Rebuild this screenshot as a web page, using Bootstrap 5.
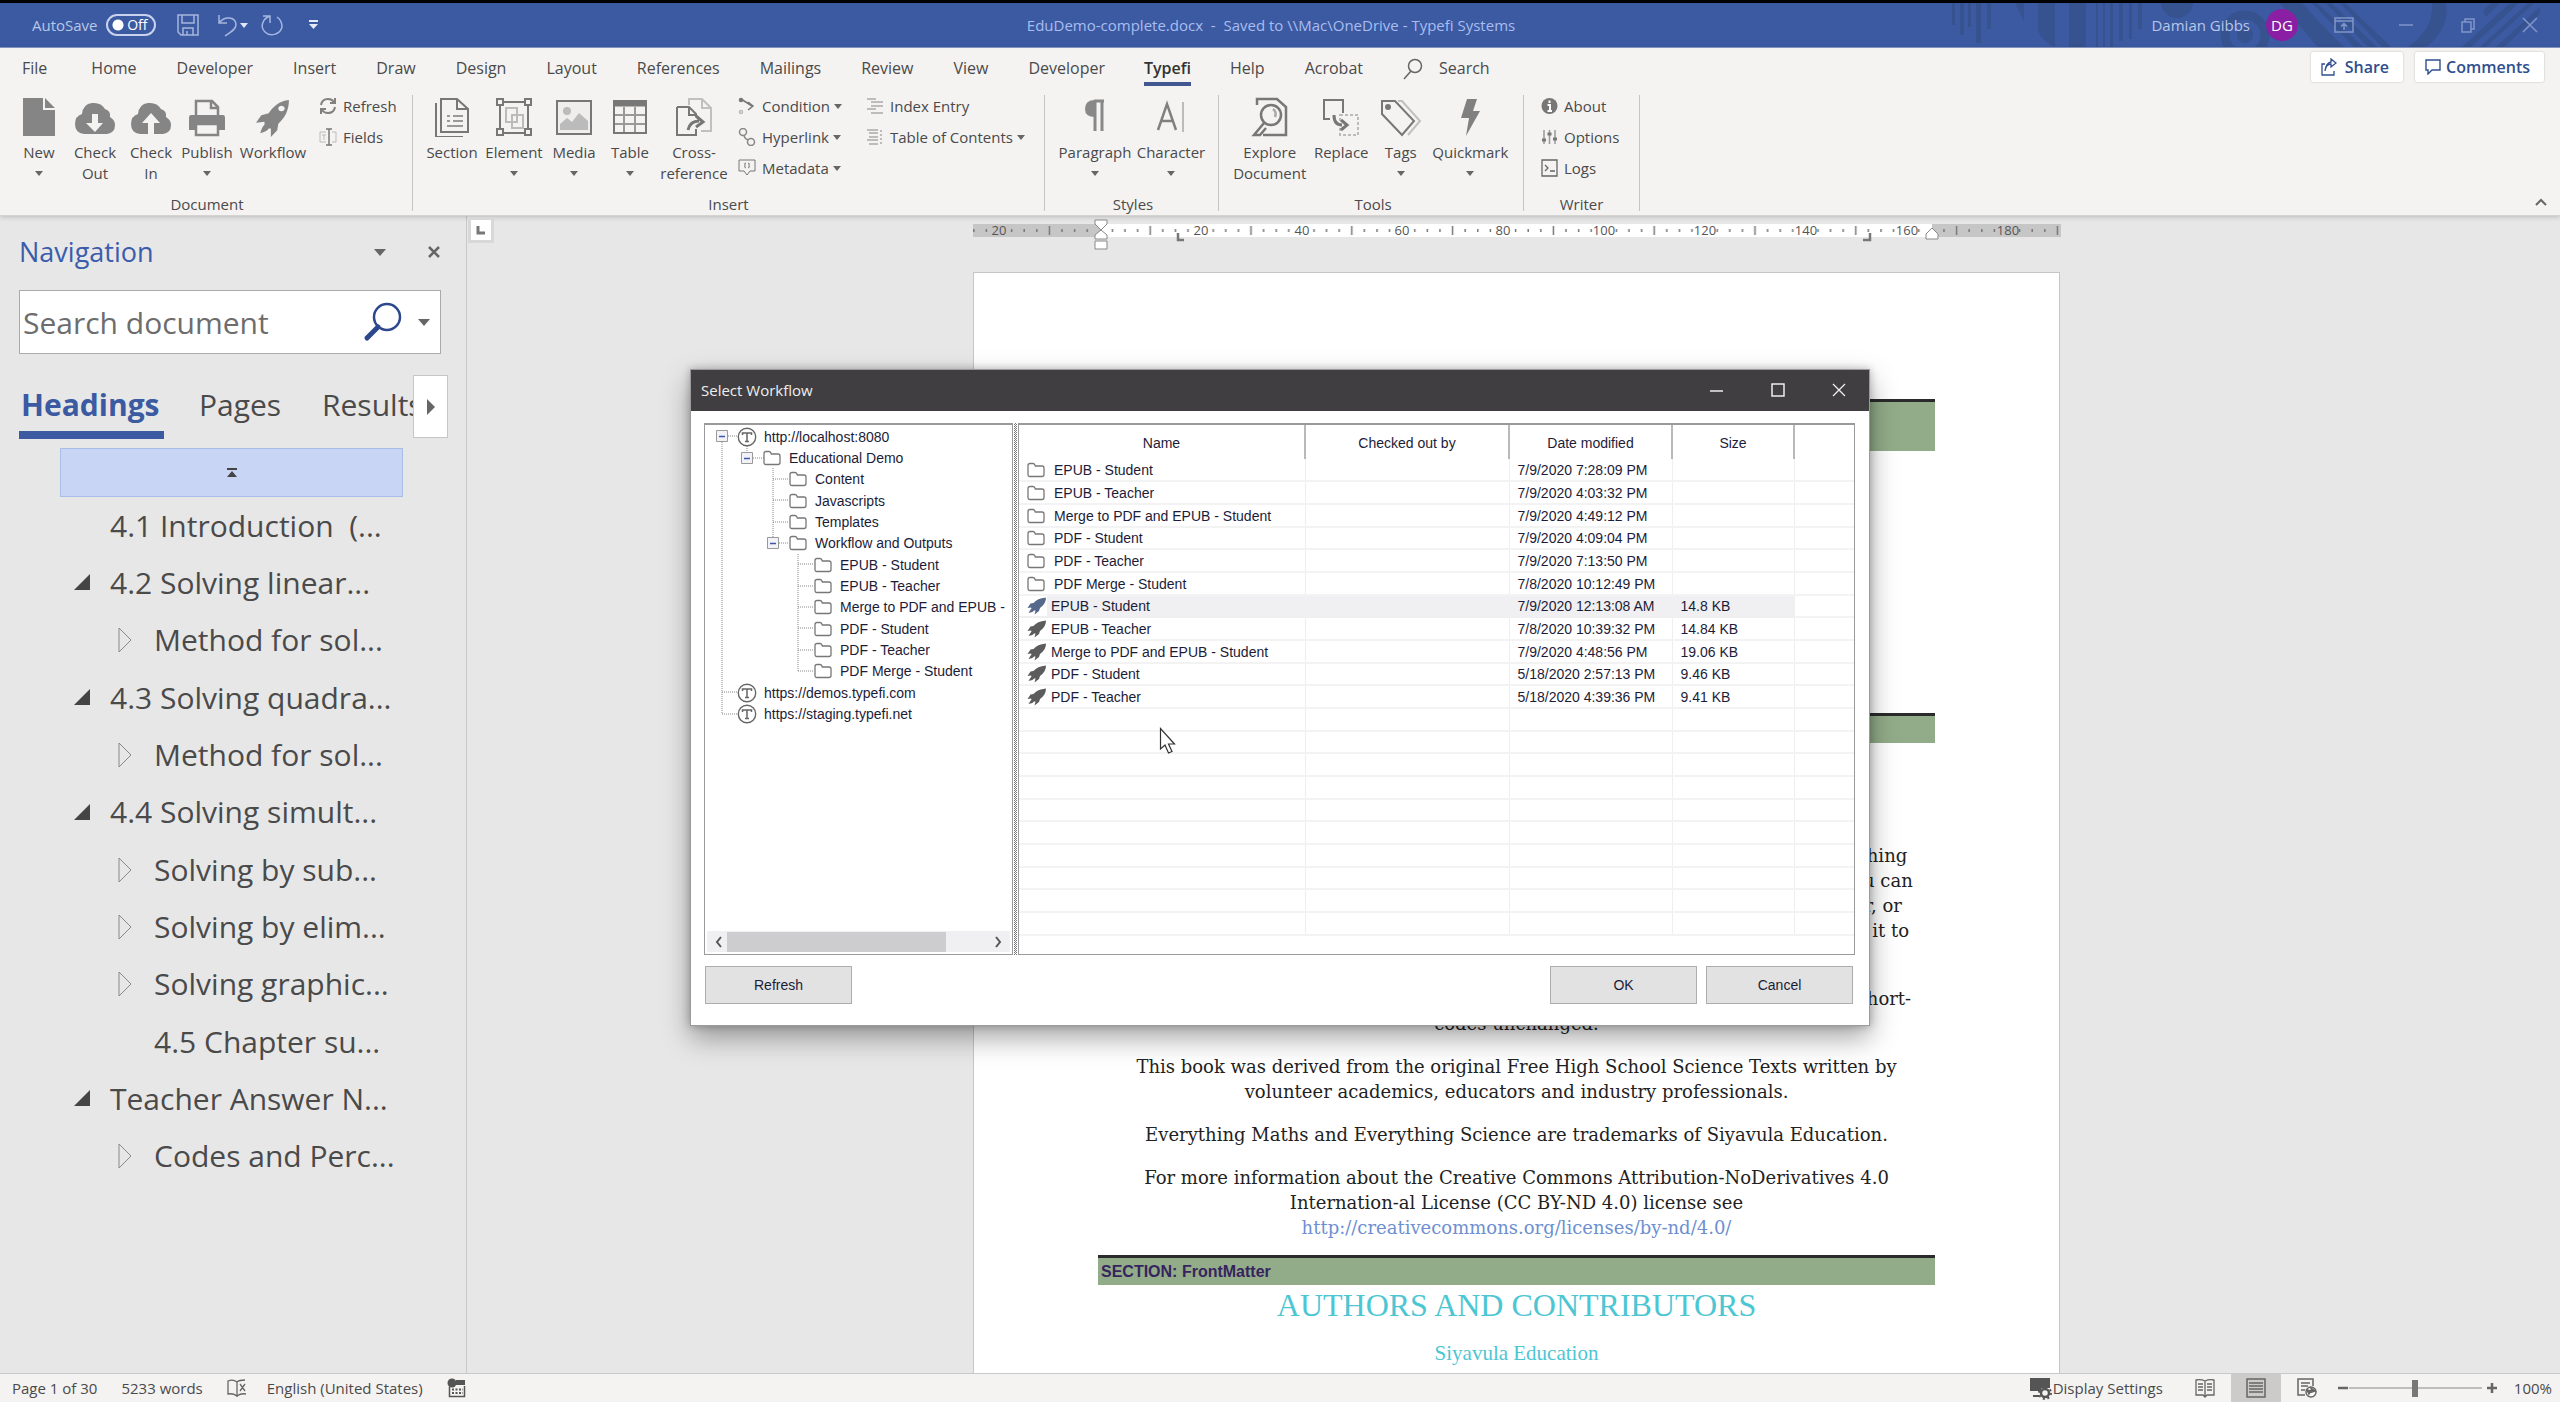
<!DOCTYPE html>
<html lang="en">
<head>
<meta charset="utf-8">
<meta name="viewport" content="width=device-width, initial-scale=1">
<title>EduDemo-complete.docx</title>
<link href="https://cdn.jsdelivr.net/npm/bootstrap@5.3.0/dist/css/bootstrap.min.css" rel="stylesheet">
<style>
:root{--word:#3b5aa2;--ink:#4a4a4a;--chrome:#f4f3f2;--desk:#e7e7e7}
body{font-family:"Open Sans","Noto Sans",sans-serif;font-size:15px;line-height:20px;color:var(--ink);background:var(--desk)}
svg{display:block;flex:none}
button{background:none;border:0;padding:0;color:inherit}
.titlebar{height:48px;background:var(--word);border-top:3px solid #000;border-bottom:1px solid #8c9cc6;color:#b9c6e8}
.titlebar .deco{top:0;right:0}
.title-side{flex:1 1 0}
.doc-name{color:#a9bdf0;margin-right:18px;white-space:pre}
.save-switch{appearance:none;width:50px;height:22px;border:2px solid #c8d2ec;border-radius:11px;margin:0;background:radial-gradient(circle at 10px 9px,#fff 5px,transparent 6px)}
.save-off{right:8px;top:1px;color:#fff;font-size:14px;line-height:20px}
.avatar{width:32px;height:32px;background:#8a1fa3;color:#fff;font-size:15px;margin:0 36px 0 16px}
.win-btns{gap:42px}
.ribbon{background:var(--chrome);border-bottom:1px solid #d5d3d0;box-shadow:0 1px 5px rgba(0,0,0,.2)}
.tabs{height:43px;font-size:16px}
.tabs a{color:var(--ink);text-decoration:none;padding:10px 20px 0;height:38px}
.tabs .tab-file{padding-right:24px;padding-left:22px}
.tabs .tab-on{font-weight:600;color:#333;padding:0}
.tabs .tab-on span{display:block;margin:0 19px;padding-top:10px;height:38px;border-bottom:4px solid #40578f}
.pill{background:#fff;color:#2f4f8f;font-size:16px;font-weight:600;height:30px;border-radius:2px;box-shadow:0 0 2px rgba(0,0,0,.25);padding:0 14px 0 10px}
.group{height:116px;border-right:1px solid #c4c4c4;padding:0 9px}
.g-doc{width:413px;padding-left:11px}.g-ins{width:632px}.g-sty{width:174px;padding-left:12px}.g-tool{width:305px;padding-left:13px}.g-wri{width:116px}
.group-body{height:99px}
.group-name{line-height:20px;height:17px}
.big{display:flex;flex-direction:column;align-items:center;padding-top:2px;line-height:21px}
.big svg{margin-bottom:5px;height:40px}
.w52{width:52px}.w56{width:56px}.w60{width:60px}.w64{width:64px}.w68{width:68px}.w72{width:72px}.w76{width:76px}.w88{width:88px}
.stack{padding-top:1px;gap:11px}
.stack button{display:flex;align-items:center;gap:6px;height:20px;white-space:nowrap}
.stack .caret{margin-left:-2px}
.caret{width:0;height:0;border:4px solid transparent;border-top:5px solid #666;border-bottom:0;display:inline-block}
.caret.lg{border-width:6px;border-top-width:7px;border-bottom:0}
.big .caret{margin-top:8px}
.navpane{width:467px;border-right:1px solid #c8c8c8;padding:18px 18px 0 19px}
.pane-title{font-size:27px;line-height:36px;color:#3a5cab}
.pane-ctl{gap:42px}
.findbox{height:64px;background:#fff;border:1px solid #ababab;margin:20px 7px 0 0;padding:0 10px 0 3px}
.findbox input{border:0;outline:0;padding:0;height:48px;font-size:30px;color:#666;min-width:0;background:none}
.findbox input::placeholder{color:#6d6d6d;opacity:1}
.pane-tabs{margin-top:21px;height:64px;font-size:30px;line-height:40px}
.pane-tabs button{padding:0 0 4px;height:64px;text-align:left}
.pane-tabs .on{font-weight:700;color:var(--word);border-bottom:8px solid var(--word);padding:4px 0 0 2px;width:145px;margin-right:35px}
.pane-tabs .pg{width:123px}
.pane-tabs .res{width:91px;overflow:hidden}
.pane-tabs .more{width:35px;height:63px;background:#fff;border:1px solid #c6c6c6;padding:0;display:flex;align-items:center;justify-content:center}
.jump{height:49px;margin:9px 45px 0 41px;background:#c9d5f5;border:1px solid #a9bde8}
.headings{font-size:30px;padding-left:55px}
.headings li{height:57px;display:flex;align-items:center;white-space:pre}
.headings li:nth-child(3n){height:58px}
.headings .twist{width:36px}
.headings .sub{padding-left:44px}
.desk{padding-left:6px}
.corner{width:26px;height:26px;background:#fff;border:3px solid #d8d8d8;left:1px;top:1px}
.ruler{margin-top:3px;width:1088px}
.ruler text{font:13px "Open Sans",sans-serif;fill:#555;text-anchor:middle}
.paper{width:1087px;margin-top:21px;background:#fff;border:1px solid #c6c6c6;border-bottom:0;padding:126px 124px 0;font:18px/25px "DejaVu Serif",serif;color:#222;text-align:center;white-space:nowrap}
.paper p{margin-bottom:18px}
.band{background:#92ac89;border-top:3px solid #2b2b2b;height:30px;text-align:left;padding-left:3px;font:bold 16px/27px "Liberation Sans",Arial,sans-serif;color:#37245f}
.band.tall{height:52px;margin-bottom:262px}
.band.mid{margin-bottom:100px}
.paper a{color:#6e8fd0;text-decoration:none}
.paper .last{margin-bottom:15px}
.paper h1{font:32px/40px "Liberation Serif",serif;color:#4cc6d3;margin:0 0 16px}
.paper h2{font:21px/24px "Liberation Serif",serif;color:#4cc6d3}
.statusbar{height:29px;background:var(--chrome);border-top:1px solid #c9c9c9;white-space:nowrap}
.statusbar .view-on{width:50px;height:28px;background:#cdcbca}
.zoomer{appearance:none;width:133px;height:18px;margin:0;background:linear-gradient(#c0bebd,#c0bebd) center/100% 2px no-repeat}
.zoomer::-webkit-slider-thumb{appearance:none;width:6px;height:17px;background:#777}
.dlg{left:50%;top:369px;width:1180px;margin-left:-590px;background:#fff;border:1px solid #9b9b9b;box-shadow:0 12px 26px rgba(0,0,0,.35),0 0 8px rgba(0,0,0,.25);font:14px/20px "Liberation Sans",Arial,sans-serif;color:#1c1c38}
.dlg-head{height:41px;background:#403e41;color:#eee;font:15px/20px "Open Sans",sans-serif;padding:0 23px 2px 10px}
.dlg-head .ctl{gap:47px}
.dlg-body{padding:12px 14px 0 13px;height:544px}
.panel{border:1px solid #9a9a9c;border-top-width:2px}
.treebox{width:309px;padding:1px 2px 2px}
.gutter{width:3px;margin:0 1px;background:repeating-conic-gradient(#777 0 25%,#fff 0 50%) 0 0/2px 2px}
.listbox{min-width:0}
.tree li{height:21px;display:flex;align-items:center;white-space:nowrap;overflow:hidden;padding-left:30px}
.tree li:nth-child(3n){height:22px}
.tree li svg{margin-right:7px}
.tree .l1{padding-left:56px}.tree .l2{padding-left:82px}.tree .l3{padding-left:107px}
.tree .l1 svg,.tree .l2 svg,.tree .l3 svg{margin-right:8px}
.guides{left:0;top:0}
.hbar{height:21px;background:#f0f0f2}
.hbar .thumb{width:219px;height:20px;background:#cdcdcf}
.files{table-layout:fixed;width:100%;border-collapse:collapse}
.files th{height:34px;font-weight:400;text-align:center;padding:2px 0 0;border-right:2px solid #b9b9bb}
.files th:last-child{border-right:0}
.files td{height:23px;padding:0 0 0 8px;border-right:1px solid #efefef;border-bottom:2px solid #f3f3f3;line-height:20px;white-space:nowrap}
.files td:last-child{border-right:0}
.files tr:nth-child(3n+1) td{height:22px}
.files .sel td:not(:last-child){background:#f0eff2;border-color:#f0eff2}
.files .sel td:first-child{background:linear-gradient(90deg,#fff 28px,#f0eff2 28px)}
.fi{gap:9px}.ro{gap:4px}
.dbtn{width:147px;height:38px;background:#e2e2e2;border:1px solid #adadad;color:#1c1c38}
.dlg-foot{padding:11px 16px 21px 14px;gap:9px}
.pointer{left:1159px;top:727px}
</style>
<script src="https://cdn.jsdelivr.net/npm/bootstrap@5.3.0/dist/js/bootstrap.bundle.min.js"></script>
</head>
<body class="vh-100 d-flex flex-column overflow-hidden">
<svg width="0" height="0" class="position-absolute" aria-hidden="true">
<symbol id="folder" viewBox="0 0 18 16"><path d="M1 3.5Q1 1.5 3 1.5H6Q7.3 1.5 7.8 2.7L8.3 4H15Q17 4 17 6V12.5Q17 14.5 15 14.5H3Q1 14.5 1 12.5Z" fill="none" stroke="#777" stroke-width="1.3"/></symbol>
<symbol id="rocket" viewBox="0 0 32 40" preserveAspectRatio="none"><path d="M31 1C22 2 16 8 12 15L5 17 0 25 8 24 8 27C6 29 5 32 4 36 8 35 11 33 12 31L14 31 14 40 20 33 21 26C27 20 31 12 31 1ZM24 7A3 3 0 1 1 23.900 7Z" fill="currentColor" fill-rule="evenodd"/></symbol>
<symbol id="rocket-sm" viewBox="0 0 20 18"><path d="M19 0.500C13 1 9 3 6.500 6L3.500 6.500 0.500 11 4 10.500 4.500 11.500C3.500 12.500 2.500 14 1.500 16 4 15.500 6 15 7 13.500L8.500 13.500 7.500 17.500 12 14 13 11C17 8 19 4.500 19 0.500Z" fill="currentColor"/></symbol>
<symbol id="tmark" viewBox="0 0 20 20"><circle cx="10" cy="10" r="8.700" fill="#fff" stroke="#666" stroke-width="1.400"/><path d="M5.500 8V6H14.500V8M10 6V14.500M8 14.500H12" fill="none" stroke="#666" stroke-width="1.500"/></symbol>
</svg>

<header class="titlebar position-relative d-flex align-items-center px-3">
  <svg class="deco position-absolute" width="620" height="44" aria-hidden="true" fill="#36528f">
    <path d="M12 0h3v22h-3zM20 0h4v32h-4zM28 0h3v24h-3zM36 0h5v40h-5zM47 0h4v26h-4zM75 0h9v18zM98 0h17v44q-17-8-17-20zM129 0h17v44h-17zM156 0h2v44h-2zM163 0h2v44h-2zM170 0h3v44h-3zM179 0h4v38h-4zM189 0h3v36h-3zM198 0h4v26h-4z"/>
    <circle cx="237" cy="-1" r="16"/>
    <circle cx="305" cy="32" r="20" fill="none" stroke="#36528f" stroke-width="9"/><circle cx="305" cy="32" r="8"/>
    <path d="M340 0h22l40 44h-24zM364 10h6l34 34h-8zM372 0h5l46 44h-9zM386 0h5l46 44h-9zM400 0h5l46 44h-9zM492 0h14q4 26-20 44h-18q26-18 24-44zM543 8l8-8h9l-14 14zM522 44l48-44h9l-48 44zM540 44l48-44h6l-48 44zM556 44l44-40v6l-36 34z"/>
  </svg>
  <div class="title-side d-flex align-items-center position-relative">
    <label for="autosave" class="ms-3 me-2">AutoSave</label>
    <div class="position-relative d-flex"><input id="autosave" class="save-switch" type="checkbox" role="switch"><span class="save-off position-absolute">Off</span></div>
    <button class="ms-3" aria-label="Save"><svg class="ms-1" width="24" height="24" fill="none" stroke="#a7b6de" stroke-width="1.500"><path d="M2 2H22V22H5L2 19ZM6 2V10H18V2M7 22V15H17V22M11 18V22"/></svg></button>
    <button class="ms-3 d-flex align-items-center" aria-label="Undo"><svg width="24" height="24" fill="none" stroke="#a7b6de" stroke-width="1.500"><path d="M3 2V10H11M3 10C9 2 20 4 20 12 20 16 15 19 9 23"/></svg><i class="caret" style="border-top-color:#dfe6f7"></i></button>
    <button class="ms-2" aria-label="Redo"><svg class="ms-1" width="24" height="24" fill="none" stroke="#a7b6de" stroke-width="1.500"><path d="M3 3H10V10M10 3C2 6 0 14 5 19 10 24 20 22 22 14 22 10 20 6 17 4"/></svg></button>
    <button class="ms-4" aria-label="Customize toolbar"><svg width="10" height="12" fill="#e6ebf8"><path d="M1 1H10V3H1ZM1 5H10L5.500 10Z"/></svg></button>
  </div>
  <div class="doc-name position-relative">EduDemo-complete.docx  -  Saved to \\Mac\OneDrive - Typefi Systems</div>
  <div class="title-side d-flex align-items-center justify-content-end position-relative">
    <span>Damian Gibbs</span>
    <span class="avatar rounded-circle d-flex align-items-center justify-content-center">DG</span>
    <div class="win-btns d-flex align-items-center me-1">
      <button aria-label="Ribbon display"><svg width="20" height="16" fill="none" stroke="#8195c8" stroke-width="1.500"><path d="M1 1H19V15H1ZM1 4H19M10 13V7M7 9.500L10 6.500 13 9.500"/></svg></button>
      <button aria-label="Minimize"><svg width="20" height="16" stroke="#8195c8" stroke-width="1.500"><path d="M3 8H17"/></svg></button>
      <button aria-label="Restore"><svg width="20" height="16" fill="none" stroke="#8195c8" stroke-width="1.500"><path d="M4 5H13V15H4ZM7 5V2H16V12H13"/></svg></button>
      <button aria-label="Close"><svg width="20" height="16" stroke="#8195c8" stroke-width="1.500"><path d="M3 1L17 15M17 1L3 15"/></svg></button>
    </div>
  </div>
</header>

<div class="ribbon position-relative">
  <nav class="tabs d-flex">
    <a class="tab-file" href="#">File</a><a href="#">Home</a><a href="#">Developer</a><a href="#">Insert</a><a href="#">Draw</a><a href="#">Design</a><a href="#">Layout</a><a href="#">References</a><a href="#">Mailings</a><a href="#">Review</a><a href="#">View</a><a href="#">Developer</a><a class="tab-on" href="#"><span>Typefi</span></a><a href="#">Help</a><a href="#">Acrobat</a>
    <a href="#" class="d-flex align-items-start gap-3"><svg width="20" height="22" fill="none" stroke="#666" stroke-width="1.500"><circle cx="12" cy="8" r="6.500"/><path d="M8 13L1 21"/></svg>Search</a>
    <div class="ms-auto d-flex gap-2 pt-1 pe-3">
      <button class="pill d-flex align-items-center gap-2"><svg width="16" height="18" fill="none" stroke="#2f4f8f" stroke-width="1.300"><path d="M4 6H1V17H13V13M4 13Q5 6 10 6V9L15 5 10 1V4Q5 5 4 13"/></svg>Share</button>
      <button class="pill d-flex align-items-center gap-1 ms-1"><svg width="17" height="16" fill="none" stroke="#2f4f8f" stroke-width="1.400"><path d="M1 1H15V11H7L3 15V11H1Z"/></svg>Comments</button>
    </div>
  </nav>
  <div class="d-flex pt-1 pb-1">
    <section class="group g-doc"><div class="group-body d-flex">
      <button class="big w56"><svg width="34" height="40" fill="#858585"><path d="M1 1H21V13H33V39H1ZM23 1L33 11H23Z"/></svg>New<i class="caret"></i></button>
      <button class="big w56"><svg width="42" height="40" fill="#858585"><path fill-rule="evenodd" d="M10 37Q1 36 1 27 1 19 8 17 9 7 18 6 27 5 31 12 37 14 36 20 41 23 41 28 41 36 33 37ZM18 17V26H12L21 35 29 26H24V17Z"/></svg>Check<br>Out</button>
      <button class="big w56"><svg width="42" height="40" fill="#858585"><path fill-rule="evenodd" d="M10 37Q1 36 1 27 1 19 8 17 9 7 18 6 27 5 31 12 37 14 36 20 41 23 41 28 41 36 33 37ZM18 37V26H12L21 16 30 26H24V37Z"/></svg>Check<br>In</button>
      <button class="big w56"><svg width="38" height="40" fill="none" stroke="#858585" stroke-width="2.500"><path d="M8 18V4H24L30 10V18M23 4V11H30"/><path d="M3 18H35Q37 18 37 21V33H1V21Q1 18 3 18Z" fill="#858585" stroke="none"/><path d="M8 27H30V38H8Z" fill="#f4f3f2"/></svg>Publish<i class="caret"></i></button>
      <button class="big w76"><svg width="34" height="40" style="color:#858585"><use href="#rocket" width="34" height="38" y="2"/></svg>Workflow</button>
      <div class="stack d-flex flex-column ms-2">
        <button><svg width="18" height="18" fill="none" stroke="#808080" stroke-width="2"><path d="M2 8Q3 2 9 2 13 2 15 5M16 1V6H11M16 10Q15 16 9 16 5 16 3 13M2 17V12H7"/></svg>Refresh</button>
        <button><svg width="18" height="20" fill="none" stroke="#999"><path d="M7 5H1V15H7M13 5H17V15H13" stroke="#bbb"/><path d="M3 8H7M5 8V13" stroke="#bbb"/><path d="M7 2H13M10 2V18M7 18H13" stroke-width="1.500" stroke="#777"/></svg>Fields</button>
      </div>
    </div><div class="group-name text-center">Document</div></section>
    <section class="group g-ins"><div class="group-body d-flex">
      <button class="big w60"><svg width="36" height="42" fill="none" stroke="#777" stroke-width="2"><path d="M7 2H23L34 12V35H7ZM23 2V12H34M2 6V40H29"/><path d="M13 19H16M19 19H29M13 24H16M19 24H29M13 29H29" stroke="#999"/></svg>Section</button>
      <button class="big w64"><svg width="38" height="40" fill="none" stroke="#777" stroke-width="2"><path d="M5 7V33M33 7V33M7 5H31M7 36H31"/><path d="M2 2H8V8H2ZM30 2H36V8H30ZM2 32H8V38H2ZM30 32H36V38H30Z"/><path d="M11 11H22V25H11ZM17 18H28V31H17Z" stroke="#bbb"/></svg>Element<i class="caret"></i></button>
      <button class="big w56"><svg width="38" height="40"><rect x="2" y="4" width="34" height="33" fill="#efeeed" stroke="#777" stroke-width="2"/><circle cx="12" cy="14" r="4" fill="#bbb"/><path d="M5 33V27L12 21 17 25 24 16 33 24V33Z" fill="#bbb"/></svg>Media<i class="caret"></i></button>
      <button class="big w56"><svg width="36" height="40" fill="none" stroke="#777" stroke-width="2"><path d="M2 4H34V36H2Z"/><path d="M2 7H34" stroke-width="5"/><path d="M3 18H33M3 27H33M12 10V35M23 10V35" stroke="#999"/></svg>Table<i class="caret"></i></button>
      <button class="big w72"><svg width="38" height="42" fill="none" stroke="#777" stroke-width="2"><path d="M14 8V2H27L36 11V34H26M27 2V11H36" stroke="#c0c0c0"/><path d="M2 10H14L21 17V20M2 10V38H21V32M14 10V18H20"/><path d="M13 33Q15 24 24 24M21 19L28 25 21 30" stroke-width="3"/></svg>Cross-<br>reference</button>
      <div class="stack d-flex flex-column ms-2">
        <button><svg width="18" height="18" fill="none" stroke="#777" stroke-width="1.500"><path d="M3 2L14 9M10 5L15 9 10 13"/><circle cx="3" cy="3" r="1.500" fill="#777"/><circle cx="3" cy="15" r="1.500" stroke="#bbb"/></svg>Condition<i class="caret"></i></button>
        <button><svg width="18" height="18" fill="none" stroke="#888" stroke-width="1.500"><circle cx="5" cy="4" r="3.500"/><circle cx="13" cy="14" r="3.500"/><path d="M6 8Q7 11 10 12"/></svg>Hyperlink<i class="caret"></i></button>
        <button><svg width="18" height="18" fill="none" stroke="#777"><path d="M1 1H17V12H12L9 16 6 12H1Z"/><path d="M8 4Q6 4 7 6 6 9 8 9M10 4Q12 4 11 6 12 9 10 9"/></svg>Metadata<i class="caret"></i></button>
      </div>
      <div class="stack d-flex flex-column ms-4">
        <button><svg width="18" height="18" fill="none" stroke="#aaa" stroke-width="1.500"><path d="M1 2H10M5 5H17M5 9H17M1 12H10M5 16H17"/></svg>Index Entry</button>
        <button><svg width="18" height="18" fill="none" stroke="#aaa" stroke-width="1.500"><path d="M1 2H12M3 5H12M3 9H12M1 12H12M3 16H12"/><path d="M15 2V17" stroke-dasharray="2 2"/></svg>Table of Contents<i class="caret"></i></button>
      </div>
    </div><div class="group-name text-center">Insert</div></section>
    <section class="group g-sty"><div class="group-body d-flex">
      <button class="big w76"><svg width="24" height="40"><path d="M11 4H21M12 4V34M19 4V34" stroke="#888" stroke-width="3" fill="none"/><path d="M12 3Q2 3 2 12 2 20 12 20Z" fill="#888"/></svg>Paragraph<i class="caret"></i></button>
      <button class="big w76"><svg width="32" height="40" fill="none" stroke="#808080" stroke-width="2.500"><path d="M3 33L12 7 21 33M6 24H18"/><path d="M28 5V35" stroke="#bbb" stroke-width="2"/></svg>Character<i class="caret"></i></button>
    </div><div class="group-name text-center">Styles</div></section>
    <section class="group g-tool"><div class="group-body d-flex">
      <button class="big w76"><svg width="38" height="40" fill="none" stroke="#777" stroke-width="2.500"><path d="M6 8V2H26L35 10V38H12"/><circle cx="20" cy="18" r="10"/><path d="M13 26L3 38H9L15 31"/><path d="M22 12Q26 15 24 20" stroke="#aaa"/></svg>Explore<br>Document</button>
      <button class="big w68"><svg width="38" height="40" fill="none" stroke="#777" stroke-width="2"><path d="M8 22H2V3H21V16"/><path d="M18 18H36V38H18Z" stroke="#bbb" stroke-dasharray="3 2"/><path d="M12 18Q12 28 20 28M19 23L25 28 19 33" stroke-width="3"/></svg>Replace</button>
      <button class="big w52"><svg width="42" height="40" fill="none" stroke="#777" stroke-width="2"><path d="M18 4H22L40 24 28 38" stroke="#c0c0c0"/><path d="M2 4H15L34 24 22 38 2 17Z"/><circle cx="8" cy="10" r="2" fill="#777"/></svg>Tags<i class="caret"></i></button>
      <button class="big w88"><svg width="22" height="40" fill="#808080"><path d="M8 2H18L14 14H21L7 39 10 21H2Z"/></svg>Quickmark<i class="caret"></i></button>
    </div><div class="group-name text-center">Tools</div></section>
    <section class="group g-wri"><div class="group-body d-flex">
      <div class="stack d-flex flex-column ms-2">
        <button><svg width="17" height="18"><circle cx="8.500" cy="9" r="8" fill="#777"/><path d="M8.500 3.500V6M6.500 8H9V14M6.500 14H11" stroke="#fff" stroke-width="2" fill="none"/></svg>About</button>
        <button><svg width="17" height="18" stroke="#999" stroke-width="1.500"><path d="M3 2V16M8.500 2V16M14 2V16"/><path d="M1 12H5M6.500 6H10.500M12 11H16" stroke="#777" stroke-width="3"/></svg>Options</button>
        <button><svg width="17" height="18" fill="none" stroke="#666" stroke-width="1.300"><path d="M1 1H16V17H1ZM4 6L7 9 4 12M9 12H14"/></svg>Logs</button>
      </div>
    </div><div class="group-name text-center">Writer</div></section>
    <button class="ms-auto align-self-end me-2 pb-1" aria-label="Collapse ribbon"><svg class="me-1" width="14" height="10" fill="none" stroke="#666" stroke-width="2"><path d="M2 8L7 3 12 8"/></svg></button>
  </div>
</div>

<main class="flex-fill d-flex overflow-hidden">
  <aside class="navpane flex-shrink-0">
    <div class="d-flex align-items-center">
      <h2 class="pane-title fw-normal m-0 me-auto">Navigation</h2>
      <div class="pane-ctl d-flex align-items-center me-2">
        <button aria-label="Pane options" class="d-flex"><i class="caret lg"></i></button>
        <button aria-label="Close pane"><svg width="12" height="12" stroke="#666" stroke-width="2.500"><path d="M1 1L11 11M11 1L1 11"/></svg></button>
      </div>
    </div>
    <div class="findbox d-flex align-items-center">
      <input id="find" class="flex-fill" type="text" placeholder="Search document" aria-label="Search document">
      <svg width="40" height="40" fill="none" stroke="#2c478c"><circle cx="25" cy="15" r="13" stroke-width="2.500"/><path d="M16 25L5 36" stroke-width="5" stroke-linecap="round"/></svg>
      <button aria-label="Search options" class="ms-3 d-flex"><i class="caret lg"></i></button>
    </div>
    <div class="pane-tabs d-flex">
      <button class="on">Headings</button><button class="pg">Pages</button><button class="res">Results</button>
      <button class="more" aria-label="More"><svg width="8" height="16" fill="#666"><path d="M0 0L8 8 0 16Z"/></svg></button>
    </div>
    <div class="jump d-flex align-items-center justify-content-center"><svg width="10" height="10" fill="#444"><path d="M0 0H10V2H0ZM0 9L5 3 10 9Z"/></svg></div>
    <ul class="headings list-unstyled m-0">
      <li><span class="twist"></span>4.1 Introduction  (...</li>
      <li><span class="twist"><svg width="17" height="17" fill="#444"><path d="M0 16H16V0Z"/></svg></span>4.2 Solving linear...</li>
      <li class="sub"><span class="twist"><svg width="15" height="26" fill="none" stroke="#888"><path d="M1 1V25L13 13Z"/></svg></span>Method for sol...</li>
      <li><span class="twist"><svg width="17" height="17" fill="#444"><path d="M0 16H16V0Z"/></svg></span>4.3 Solving quadra...</li>
      <li class="sub"><span class="twist"><svg width="15" height="26" fill="none" stroke="#888"><path d="M1 1V25L13 13Z"/></svg></span>Method for sol...</li>
      <li><span class="twist"><svg width="17" height="17" fill="#444"><path d="M0 16H16V0Z"/></svg></span>4.4 Solving simult...</li>
      <li class="sub"><span class="twist"><svg width="15" height="26" fill="none" stroke="#888"><path d="M1 1V25L13 13Z"/></svg></span>Solving by sub...</li>
      <li class="sub"><span class="twist"><svg width="15" height="26" fill="none" stroke="#888"><path d="M1 1V25L13 13Z"/></svg></span>Solving by elim...</li>
      <li class="sub"><span class="twist"><svg width="15" height="26" fill="none" stroke="#888"><path d="M1 1V25L13 13Z"/></svg></span>Solving graphic...</li>
      <li class="sub"><span class="twist"></span>4.5 Chapter su...</li>
      <li><span class="twist"><svg width="17" height="17" fill="#444"><path d="M0 16H16V0Z"/></svg></span>Teacher Answer N...</li>
      <li class="sub"><span class="twist"><svg width="15" height="26" fill="none" stroke="#888"><path d="M1 1V25L13 13Z"/></svg></span>Codes and Perc...</li>
    </ul>
  </aside>
  <div class="desk flex-fill position-relative d-flex flex-column align-items-center">
    <div class="corner position-absolute"><svg width="20" height="20" fill="none" stroke="#777" stroke-width="3"><path d="M7 6V13H14"/></svg></div>
    <svg class="ruler" height="32" viewBox="0 0 1088 32">
      <defs><pattern id="ticks" x="26" y="0" width="100.800" height="32" patternUnits="userSpaceOnUse"><path d="M12.600 10v3M25.200 10v3M37.800 10v3M50.400 7v9M63 10v3M75.600 10v3M88.200 10v3" stroke="#777" stroke-width="1.500"/></pattern></defs>
      <rect y="5" width="1088" height="13" fill="#c6c6c6"/><rect x="128" y="5" width="831" height="13" fill="#fff"/>
      <rect y="5" width="1088" height="13" fill="url(#ticks)"/>
      <text x="26" y="16">20</text><text x="228" y="16">20</text><text x="329" y="16">40</text><text x="429" y="16">60</text><text x="530" y="16">80</text><text x="631" y="16">100</text><text x="732" y="16">120</text><text x="833" y="16">140</text><text x="934" y="16">160</text><text x="1035" y="16">180</text>
      <path d="M122 1H134V5L128 11 134 16V20H122V16L128 11 122 5ZM122 22H134V30H122ZM953 20V15L959 9 965 15V20Z" fill="#fff" stroke="#888"/>
      <path d="M205 14V21H211M897 14V21H890" fill="none" stroke="#777" stroke-width="2.500"/>
    </svg>
    <article class="paper flex-fill">
      <div class="band tall"></div>
      <div class="band mid"></div>
      <p>You are allowed and encouraged to copy any of the Everything Maths and Everything<br>Science textbooks. You can legally photocopy any page or even the books, and you can<br>download it from our web site, read it on your phone, a tablet, an iPad, computer, or<br>burn it to a CD, put it on your own flash drive, e-mail it all around or even upload it to<br>your website.</p>
      <p>The only restriction is that you have to keep this book, cover, title, contents and short-<br>codes unchanged.</p>
      <p>This book was derived from the original Free High School Science Texts written by<br>volunteer academics, educators and industry professionals.</p>
      <p>Everything Maths and Everything Science are trademarks of Siyavula Education.</p>
      <p class="last">For more information about the Creative Commons Attribution-NoDerivatives 4.0<br>Internation-al License (CC BY-ND 4.0) license see<br><a href="#">http://creativecommons.org/licenses/by-nd/4.0/</a></p>
      <div class="band">SECTION: FrontMatter</div>
      <h1>AUTHORS AND CONTRIBUTORS</h1>
      <h2>Siyavula Education</h2>
    </article>
  </div>
</main>

<footer class="statusbar d-flex align-items-center">
  <span class="ms-2 me-4 ps-1">Page 1 of 30</span><span class="me-4">5233 words</span>
  <svg width="20" height="20" fill="none" stroke="#666" stroke-width="1.300"><path d="M10 4Q6 1 1 3V16Q6 15 10 18 14 15 19 16M10 4V19M10 4Q12 2 18 2M13 6L18 13M18 6L13 13"/></svg>
  <span class="ms-3 me-4 ps-1">English (United States)</span>
  <svg width="19" height="20"><circle cx="5" cy="5" r="4.500" fill="#555"/><path d="M9 2H18V7H9Z" fill="#555"/><path d="M2.500 9V18.500H17.500V8" fill="none" stroke="#555" stroke-width="1.500"/><path d="M5 11.500H16M5 15H16" fill="none" stroke="#555" stroke-width="2" stroke-dasharray="2 1.500"/></svg>
  <div class="ms-auto d-flex align-items-center">
    <svg width="24" height="24"><path d="M1 2H21V12H12V15H1Z" fill="#555"/><path d="M4 20H10" stroke="#555" stroke-width="2"/><circle cx="16" cy="17" r="4" fill="#f4f3f2" stroke="#555" stroke-width="2.500"/><circle cx="16" cy="17" r="6" fill="none" stroke="#555" stroke-width="2" stroke-dasharray="2 2.700"/></svg>
    <span class="me-4">Display Settings</span>
    <button class="me-3 ms-2" aria-label="Read mode"><svg width="20" height="20" fill="none" stroke="#666" stroke-width="1.300"><path d="M10 3Q6 1 1 2V17H8L10 19 12 17H19V2Q14 1 10 3V19M3 6H8M3 9H8M3 12H8M12 6H17M12 9H17M12 12H17"/></svg></button>
    <button class="view-on d-flex align-items-center justify-content-center" aria-label="Print layout"><svg width="20" height="20" fill="none" stroke="#666" stroke-width="1.500"><path d="M1 1H19V19H1ZM3 5H17M3 8H17M3 11H17M3 14H17"/></svg></button>
    <button class="mx-3" aria-label="Web layout"><svg width="20" height="20" fill="none" stroke="#666" stroke-width="1.500"><path d="M8 17H1V1H16V8M4 5H13M4 8H11M4 12H8"/><circle cx="14" cy="14" r="5" fill="#fff"/><path d="M10 12L14 13 12 16ZM14 10L18 13 15 14Z" fill="#666"/></svg></button>
    <button class="ms-1" aria-label="Zoom out"><svg width="12" height="12" stroke="#666" stroke-width="2.500"><path d="M1 6H11"/></svg></button>
    <input class="zoomer" type="range" min="0" max="100" value="50" aria-label="Zoom">
    <button class="ms-1" aria-label="Zoom in"><svg width="12" height="12" stroke="#666" stroke-width="2.500"><path d="M1 6H11M6 1V11"/></svg></button>
    <span class="ms-3 me-2">100%</span>
  </div>
</footer>

<div class="dlg position-absolute" role="dialog" aria-label="Select Workflow">
  <div class="dlg-head d-flex align-items-center"><span class="me-auto">Select Workflow</span>
    <div class="ctl d-flex">
      <button aria-label="Minimize"><svg width="14" height="14" stroke="#eee" stroke-width="1.500"><path d="M0 8H13"/></svg></button>
      <button aria-label="Maximize"><svg width="14" height="14" fill="none" stroke="#eee" stroke-width="1.500"><path d="M1 1H13V13H1Z"/></svg></button>
      <button aria-label="Close"><svg width="14" height="14" stroke="#eee" stroke-width="1.300"><path d="M1 1L13 13M13 1L1 13"/></svg></button>
    </div>
  </div>
  <div class="dlg-body d-flex">
    <div class="panel treebox d-flex flex-column flex-shrink-0">
      <div class="position-relative flex-fill">
        <svg class="guides position-absolute" width="130" height="300" fill="none" aria-hidden="true">
          <path d="M15 10V288M15 10H32M40 20V32M40 32H58M66 42V117M66 53H82M66 74H82M66 96H82M66 117H82M91 128V245M91 138H107M91 160H107M91 181H107M91 202H107M91 224H107M91 245H107M15 266H32M15 288H32" stroke="#888" stroke-dasharray="1 1"/>
          <g fill="#f2f2f8" stroke="#999"><path d="M9.500 4.500h11v11h-11zM34.500 26.500h11v11h-11zM60.500 111.500h11v11h-11z"/></g>
          <path d="M12 10.500h6M37 32.500h6M63 117.500h6" stroke="#3f57a8" stroke-width="1.500"/>
        </svg>
        <ul class="tree list-unstyled m-0 position-relative">
          <li><svg width="20" height="20"><use href="#tmark"/></svg>http://localhost:8080</li>
          <li class="l1"><svg width="18" height="16"><use href="#folder"/></svg>Educational Demo</li>
          <li class="l2"><svg width="18" height="16"><use href="#folder"/></svg>Content</li>
          <li class="l2"><svg width="18" height="16"><use href="#folder"/></svg>Javascripts</li>
          <li class="l2"><svg width="18" height="16"><use href="#folder"/></svg>Templates</li>
          <li class="l2"><svg width="18" height="16"><use href="#folder"/></svg>Workflow and Outputs</li>
          <li class="l3"><svg width="18" height="16"><use href="#folder"/></svg>EPUB - Student</li>
          <li class="l3"><svg width="18" height="16"><use href="#folder"/></svg>EPUB - Teacher</li>
          <li class="l3"><svg width="18" height="16"><use href="#folder"/></svg>Merge to PDF and EPUB -</li>
          <li class="l3"><svg width="18" height="16"><use href="#folder"/></svg>PDF - Student</li>
          <li class="l3"><svg width="18" height="16"><use href="#folder"/></svg>PDF - Teacher</li>
          <li class="l3"><svg width="18" height="16"><use href="#folder"/></svg>PDF Merge - Student</li>
          <li><svg width="20" height="20"><use href="#tmark"/></svg>https://demos.typefi.com</li>
          <li><svg width="20" height="20"><use href="#tmark"/></svg>https://staging.typefi.net</li>
        </ul>
      </div>
      <div class="hbar d-flex align-items-center">
        <svg class="ms-2" width="8" height="12" fill="none" stroke="#555" stroke-width="2"><path d="M6 1L2 6 6 11"/></svg>
        <div class="thumb ms-1"></div>
        <svg class="ms-auto me-2" width="8" height="12" fill="none" stroke="#555" stroke-width="2"><path d="M2 1L6 6 2 11"/></svg>
      </div>
    </div>
    <div class="gutter flex-shrink-0"></div>
    <div class="panel listbox flex-fill overflow-hidden">
      <table class="files">
        <colgroup><col style="width:286px"><col style="width:204px"><col style="width:163px"><col style="width:122px"><col></colgroup>
        <thead><tr><th>Name</th><th>Checked out by</th><th>Date modified</th><th>Size</th><th></th></tr></thead>
        <tbody id="rows"></tbody>
      </table>
    </div>
  </div>
  <div class="dlg-foot d-flex">
    <button class="dbtn me-auto">Refresh</button><button class="dbtn">OK</button><button class="dbtn">Cancel</button>
  </div>
</div>
<svg class="pointer position-absolute" width="18" height="28" aria-hidden="true"><path d="M1.500 1.500V22L6 18 9.500 26 13 24.500 9.500 17H15.500Z" fill="#fff" stroke="#333" stroke-width="1.200"/></svg>

<script>
const files = [
  ["folder","EPUB - Student","7/9/2020 7:28:09 PM",""],
  ["folder","EPUB - Teacher","7/9/2020 4:03:32 PM",""],
  ["folder","Merge to PDF and EPUB - Student","7/9/2020 4:49:12 PM",""],
  ["folder","PDF - Student","7/9/2020 4:09:04 PM",""],
  ["folder","PDF - Teacher","7/9/2020 7:13:50 PM",""],
  ["folder","PDF Merge - Student","7/8/2020 10:12:49 PM",""],
  ["rocket","EPUB - Student","7/9/2020 12:13:08 AM","14.8 KB"],
  ["rocket","EPUB - Teacher","7/8/2020 10:39:32 PM","14.84 KB"],
  ["rocket","Merge to PDF and EPUB - Student","7/9/2020 4:48:56 PM","19.06 KB"],
  ["rocket","PDF - Student","5/18/2020 2:57:13 PM","9.46 KB"],
  ["rocket","PDF - Teacher","5/18/2020 4:39:36 PM","9.41 KB"]
];
const body = document.getElementById("rows");
for (let i = 0; i < 21; i++) {
  const f = files[i];
  const tr = body.insertRow();
  if (!f) { tr.innerHTML = "<td></td>".repeat(5); continue; }
  const sel = i === 6;
  if (sel) tr.className = "sel";
  const icon = f[0] === "folder"
    ? '<svg width="18" height="16"><use href="#folder"/></svg>'
    : '<svg width="20" height="18" style="color:' + (sel ? "#56698c" : "#5c5c5c") + '"><use href="#rocket-sm"/></svg>';
  tr.innerHTML = '<td><div class="d-flex align-items-center ' + (f[0] === "folder" ? "fi" : "ro") + '">' + icon + f[1] +
    "</div></td><td></td><td>" + f[2] + "</td><td>" + f[3] + "</td><td></td>";
}
</script>
</body>
</html>
